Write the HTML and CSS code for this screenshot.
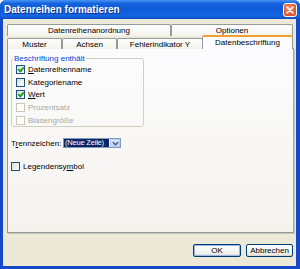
FILE: index.html
```html
<!DOCTYPE html>
<html lang="de">
<head>
  <meta charset="UTF-8" />
  <title>Datenreihen formatieren</title>
  <link rel="stylesheet" href="styles.css">
</head>
<body>
  <div class="window">
    <div class="titlebar">
      <span class="title">Datenreihen formatieren</span>
      <span class="close">
        <svg width="8" height="8" viewBox="0 0 8 8"><path d="M1 1L7 7M7 1L1 7" stroke="#fff" stroke-width="1.6" stroke-linecap="round"/></svg>
      </span>
    </div>

    <div class="client">
      <div class="tab-row top-row">
        <div class="tab t-anordnung">Datenreihenanordnung</div>
        <div class="tab t-optionen">Optionen</div>
      </div>
      <div class="tab-row bottom-row">
        <div class="tab t-muster">Muster</div>
        <div class="tab t-achsen">Achsen</div>
        <div class="tab t-fehler">Fehlerindikator Y</div>
        <div class="tab t-beschr active">Datenbeschriftung</div>
      </div>

      <div class="panel">
        <fieldset class="group">
          <legend>Beschriftung enthält</legend>
          <div class="check"><span class="box checked"></span><span><u>D</u>atenreihenname</span></div>
          <div class="check"><span class="box"></span><span>Kate<u>g</u>oriename</span></div>
          <div class="check"><span class="box checked"></span><span><u>W</u>ert</span></div>
          <div class="check disabled"><span class="box"></span><span>Prozentsatz</span></div>
          <div class="check disabled"><span class="box"></span><span>Blasengröße</span></div>
        </fieldset>

        <div class="sep-row">
          <span class="sep-label">T<u>r</u>ennzeichen:</span>
          <div class="combo">
            <span class="combo-value">(Neue Zeile)</span>
            <span class="combo-btn">
              <svg width="7" height="5" viewBox="0 0 7 5"><path d="M0.8 1L3.5 3.7L6.2 1" fill="none" stroke="#4d6185" stroke-width="1.5"/></svg>
            </span>
          </div>
        </div>

        <div class="check legend-check"><span class="box"></span><span>Legendensy<u>m</u>bol</span></div>
      </div>

      <div class="buttons">
        <button class="btn default">OK</button>
        <button class="btn">Abbrechen</button>
      </div>
    </div>
  </div>
</body>
</html>
```

FILE: styles.css
```css
html, body {
  margin: 0;
  padding: 0;
}

body {
  font-family: 'Liberation Sans', Arial, sans-serif;
  font-size: 8px;
  color: #000;
  width: 300px;
  height: 269px;
  overflow: hidden;
}

.window {
  width: 300px;
  height: 269px;
  box-sizing: border-box;
  background: #1748c9;
  display: flex;
  flex-direction: column;
  padding: 0 4px 3px 3px;
  border-radius: 6px 6px 0 0;
}

.titlebar {
  height: 19px;
  margin: 0 -4px 0 -3px;
  padding: 0 3px 0 4px;
  display: flex;
  align-items: center;
  justify-content: space-between;
  background: linear-gradient(#4a94f5, #1363de 18%, #0e5ad8 50%, #1765e0 85%, #0b4ac2);
  border-radius: 6px 6px 0 0;
}

.title {
  color: #fff;
  font-weight: bold;
  font-size: 10px;
  text-shadow: 1px 1px 0 #0b2f8a;
}

.close {
  width: 14px;
  height: 14px;
  box-sizing: border-box;
  border: 1px solid #fff;
  border-radius: 3px;
  background: radial-gradient(circle at 40% 35%, #f3906e, #e0552a 70%);
  display: flex;
  align-items: center;
  justify-content: center;
  margin-top: 1px;
}

.client {
  flex: 1;
  background: #ece9d8;
  padding: 5px 2px 0 4px;
  display: flex;
  flex-direction: column;
}

.tab-row {
  display: flex;
  align-items: flex-end;
}

.top-row {
  height: 12px;
}

.bottom-row {
  height: 13px;
  margin-bottom: -1px;
  position: relative;
}

.tab {
  box-sizing: border-box;
  height: 12px;
  border: 1px solid #919b9c;
  border-bottom: none;
  border-radius: 2px 2px 0 0;
  background: linear-gradient(#fefefe, #f3f2ec);
  display: flex;
  align-items: center;
  justify-content: center;
  white-space: nowrap;
}

.bottom-row .tab {
  height: 11px;
}

.t-anordnung { width: 164px; }
.t-optionen { width: 122px; }
.t-muster { width: 55px; }
.t-achsen { width: 55px; }
.t-fehler { width: 86px; }

.tab.t-beschr {
  width: 91px;
  height: 14px;
  background: #fcfcfe;
  border-top: 2px solid #f0a030;
  position: relative;
  z-index: 1;
  margin-left: -1px;
  padding-bottom: 2px;
}

.panel {
  width: 287px;
  height: 185px;
  box-sizing: border-box;
  border: 1px solid #919b9c;
  border-right-color: #a0a9ad;
  background: linear-gradient(#fcfcfe, #f4f3ee);
  padding: 5px 6px 0 3px;
  display: flex;
  flex-direction: column;
  box-shadow: 1px 1px 0 #c7c5b5;
}

.group {
  margin: 0;
  width: 133px;
  height: 73px;
  box-sizing: border-box;
  border: 1px solid #d0d0bf;
  border-radius: 3px;
  padding: 0 0 0 4px;
}

.group legend {
  color: #0046d5;
  padding: 0 1px;
  margin-left: -3px;
  line-height: 9px;
}

.check {
  display: flex;
  align-items: center;
  gap: 3px;
  height: 12.7px;
}

.box {
  width: 9px;
  height: 9px;
  box-sizing: border-box;
  border: 1px solid #1c5180;
  background: linear-gradient(135deg, #dcdcd5, #fff);
  position: relative;
}

.box.checked::after {
  content: "";
  position: absolute;
  left: 2px;
  top: 0px;
  width: 2px;
  height: 4px;
  border: solid #21a121;
  border-width: 0 2px 2px 0;
  transform: rotate(40deg);
}

.check.disabled {
  color: #aca899;
}

.check.disabled .box {
  border-color: #cac8bb;
  background: #fff;
}

.sep-row {
  display: flex;
  align-items: center;
  margin-top: 11px;
  height: 10px;
}

.sep-label {
  width: 52px;
  white-space: nowrap;
}

.combo {
  display: flex;
  width: 58px;
  height: 10px;
  box-sizing: border-box;
  border: 1px solid #7f9db9;
  background: #fff;
}

.combo-value {
  flex: 1;
  background: #0b2568;
  color: #fff;
  font-size: 7.5px;
  letter-spacing: -0.2px;
  line-height: 8px;
  padding-left: 1px;
  margin-right: 1px;
  white-space: nowrap;
  overflow: hidden;
}

.combo-btn {
  width: 10px;
  flex: none;
  background: linear-gradient(#dde9fe, #b9d0f8);
  border: 1px solid #b9cdf2;
  box-sizing: border-box;
  display: flex;
  align-items: center;
  justify-content: center;
}

.legend-check {
  margin-top: 12px;
}

.buttons {
  display: flex;
  justify-content: flex-end;
  gap: 5px;
  margin-top: 11px;
  padding-right: 1px;
}

.btn {
  font-family: inherit;
  font-size: 8px;
  height: 13px;
  width: 47px;
  padding: 0;
  border: 1px solid #003c74;
  border-radius: 2px;
  background: linear-gradient(#fff, #f0f0ea 80%, #d6d0c5);
  color: #000;
}

.btn.default {
  width: 48px;
  box-shadow: inset 0 0 0 1px #98b8ea;
}
```
